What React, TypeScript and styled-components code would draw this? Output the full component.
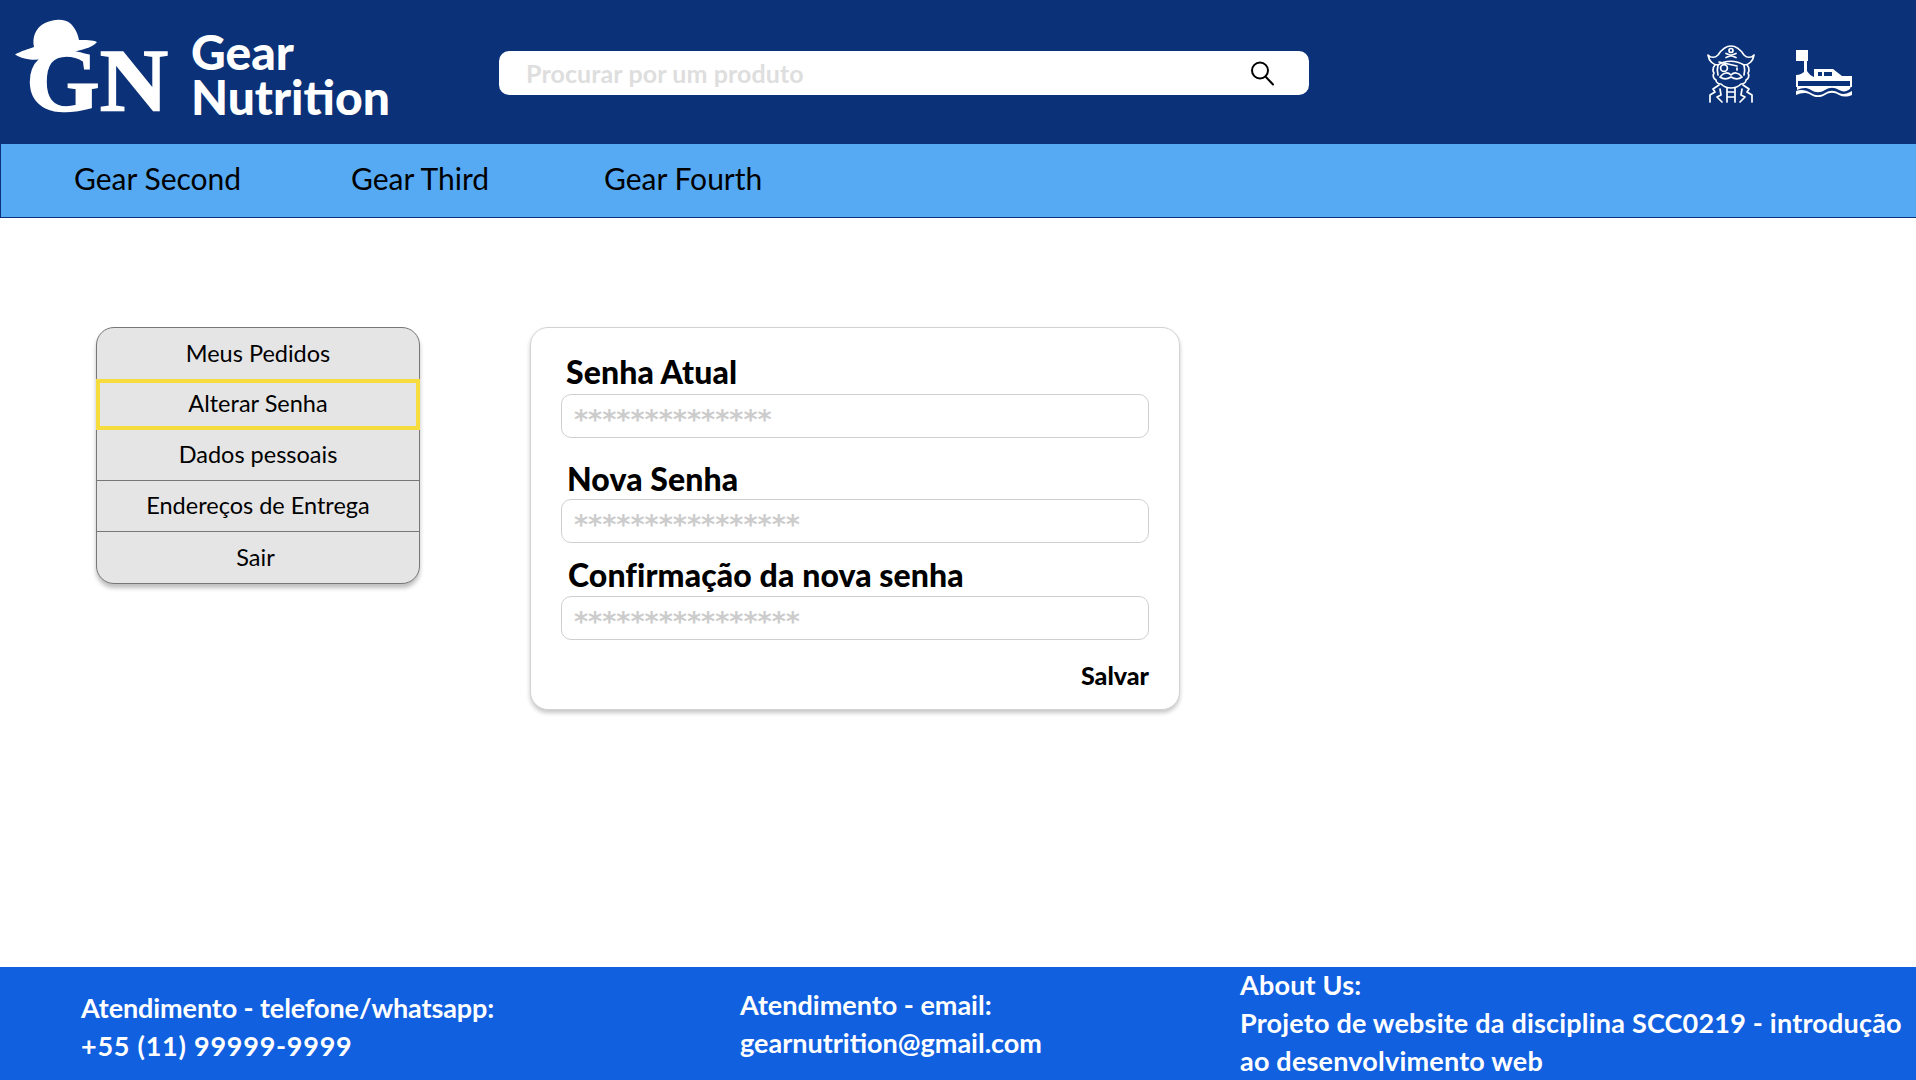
import React from "react";
import styled, { createGlobalStyle } from "styled-components";

const GlobalStyle = createGlobalStyle`
  html, body {
    margin: 0;
    padding: 0;
    background: #fff;
  }
  * {
    box-sizing: border-box;
  }
  body {
    font-family: Lato, "Noto Sans", sans-serif;
    color: #000;
  }
`;

const Page = styled.div`
  width: 1916px;
  height: 1080px;
  display: flex;
  flex-direction: column;
  overflow: hidden;
`;

const Header = styled.header`
  height: 144px;
  flex: none;
  background: #0b3278;
  display: flex;
  align-items: center;
  padding: 0 64px 0 15px;
`;

const LogoMark = styled.svg`
  width: 158px;
  height: 116px;
  flex: none;
  margin-top: 3px;
`;

const Brand = styled.div`
  width: 326px;
  flex: none;
  padding-left: 18px;
  margin-top: 4px;
  font-size: 48px;
  font-weight: 900;
  line-height: 45px;
  color: #fff;
`;

const Search = styled.div`
  width: 810px;
  height: 44px;
  margin-top: 2px;
  border-radius: 10px;
  background: #fff;
  display: flex;
  align-items: center;
  justify-content: space-between;
  padding: 0 34px 0 27px;
`;

const SearchText = styled.span`
  font-size: 25px;
  font-weight: 700;
  letter-spacing: 0.1px;
  color: #dedede;
`;

const HeaderIcons = styled.div`
  margin-left: auto;
  margin-top: 3px;
  display: flex;
  align-items: center;
  gap: 41px;
`;

const Nav = styled.nav`
  height: 74px;
  flex: none;
  background: #56aaf4;
  border-left: 1px solid #0b3278;
  border-bottom: 1px solid #0b3278;
  display: grid;
  grid-template-columns: 277px 253px auto;
  justify-content: start;
  align-items: center;
  padding: 0 0 5px 73px;
`;

const NavItem = styled.a`
  font-size: 30px;
  color: #000;
`;

const Main = styled.main`
  flex: 1;
  display: flex;
  align-items: flex-start;
  gap: 110px;
  padding: 109px 0 0 96px;
`;

const Menu = styled.ul`
  width: 324px;
  margin: 0;
  padding: 0;
  list-style: none;
  background: #e5e5e5;
  border: 1px solid #777;
  border-radius: 18px;
  box-shadow: 0 4px 4px rgba(0, 0, 0, 0.25);
`;

const MenuItem = styled.li<{ $active?: boolean; $rule?: boolean; $nudge?: number }>`
  height: 51px;
  display: flex;
  align-items: center;
  justify-content: center;
  padding: 0 ${(p) => p.$nudge ?? 0}px ${(p) => (p.$active ? 3 : 2)}px 0;
  font-size: 23.5px;
  margin: ${(p) => (p.$active ? "0 -1px" : "0")};
  border: ${(p) => (p.$active ? "4px solid #f6dc3c" : "0")};
  border-bottom: ${(p) => (p.$rule ? "1px solid #777" : undefined)};
`;

const FormCard = styled.form`
  width: 650px;
  height: 383px;
  background: #fff;
  border: 1px solid #d3d3d3;
  border-radius: 18px;
  box-shadow: 0 3px 4px rgba(0, 0, 0, 0.22);
  padding: 0 30px;
  display: flex;
  flex-direction: column;
`;

const FieldLabel = styled.label<{ $top: number; $indent: number; $height: number }>`
  display: block;
  height: ${(p) => p.$height}px;
  margin-top: ${(p) => p.$top}px;
  padding-left: ${(p) => p.$indent}px;
  font-size: 32px;
  font-weight: 900;
  line-height: 39px;
  letter-spacing: 0.1px;
`;

const FieldBox = styled.div`
  height: 44px;
  margin-top: 3px;
  border: 1px solid #cfcfcf;
  border-radius: 10px;
  padding: 8px 0 0 12px;
  font-family: "DejaVu Sans", sans-serif;
  font-size: 27px;
  font-weight: 700;
  line-height: 34px;
  color: #cccccc;
`;

const SaveRow = styled.div`
  margin-top: 20px;
  text-align: right;
  font-size: 25px;
  font-weight: 900;
  line-height: 30px;
`;

const Footer = styled.footer`
  height: 113px;
  flex: none;
  background: #1160e0;
  display: grid;
  grid-template-columns: 659px 500px 1fr;
  align-items: center;
  padding-left: 81px;
  color: #fff;
  font-size: 27px;
  font-weight: 700;
  line-height: 38px;
`;

const FooterColumn = styled.div<{ $shift?: number; $spacing?: number }>`
  margin-top: ${(p) => p.$shift ?? 0}px;
  letter-spacing: ${(p) => p.$spacing ?? 0}px;
`;

const Phone = styled.span`
  letter-spacing: 0.75px;
`;

function HatLogo() {
  return (
    <LogoMark viewBox="0 0 158 116" aria-hidden="true">
      <path
        d="M0 38.5 C6 35 14 33 19 31 C17 22 20 12 30 7 C38 3 50 2 56 8 C61 13 63 19 64 24 C70 24 78 24 82 26 C78 31 70 33 62 35 C45 40 25 45 15 43.5 C9 43 4 41 0 38.5 Z"
        fill="#fff"
      />
      <text
        x="11"
        y="94"
        fontFamily="'Liberation Serif', serif"
        fontWeight="700"
        fontSize="88"
        fill="#fff"
        stroke="#fff"
        strokeWidth="1.5"
        textLength="142"
        lengthAdjust="spacingAndGlyphs"
      >
        GN
      </text>
    </LogoMark>
  );
}

function SearchIcon() {
  return (
    <svg width="26" height="26" viewBox="0 0 26 26" fill="none" stroke="#000" strokeWidth="2">
      <circle cx="11" cy="10.5" r="8" />
      <path d="M16.5 16.5 L24 24.5" strokeLinecap="round" />
    </svg>
  );
}

function PirateIcon() {
  return (
    <svg width="48" height="58" viewBox="0 0 48 58" fill="none" stroke="#fff" strokeWidth="1.7" strokeLinecap="round" strokeLinejoin="round">
      <path d="M1 10 C4 13 8 13 11 10 C15 4 20 1 24 1 C29 1 33 4 37 10 C40 13 44 13 47 10 C46 16 42 20 37 20 C29 15 18 15 11 20 C6 20 2 16 1 10 Z" />
      <circle cx="24" cy="5.5" r="2" />
      <path d="M19 8.5 L29 12.5 M29 8.5 L19 12.5" />
      <path d="M11 20 C10 24 10 27 11 30 M37 20 C38 24 38 27 37 30" />
      <circle cx="17" cy="23" r="3.4" />
      <path d="M12 17 L30 21" />
      <path d="M30 23 L30 25" />
      <path d="M13 32 C17 27 21 27 24 30 C27 27 31 27 35 32 C31 35 27 34 24 32 C21 34 17 35 13 32 Z" />
      <path d="M8 20 C5 23 6 27 7 28 C5 31 7 34 9 35 C9 38 12 39 14 39 C17 42 20 43 24 43 C28 43 31 42 34 39 C36 39 39 38 39 35 C41 34 43 31 41 28 C42 27 43 23 40 20" />
      <path d="M12 40 L6 44 L8 47 L3 50 L3 57 M36 40 L42 44 L40 47 L45 50 L45 57" />
      <path d="M13 44 L14 50 L10 52 L15 57 M35 44 L34 50 L38 52 L33 57" />
      <path d="M20 43 L20 57 M28 43 L28 57 M20 47 L28 47 M20 52 L28 52" />
    </svg>
  );
}

function BoatIcon() {
  return (
    <svg width="56" height="47" viewBox="0 0 56 47" fill="#fff">
      <rect x="0" y="0" width="12" height="11" />
      <rect x="8" y="11" width="3" height="12" />
      <path d="M0 25 C4 25 7 23 9 21 L11 21 C13 24 15 26 18 27 L18 19 L37 19 L46 26 L56 26 L56 31 L0 31 Z" />
      <rect x="22" y="22" width="4" height="4" fill="#0b3278" />
      <rect x="28" y="22" width="8" height="4" fill="#0b3278" />
      <rect x="0" y="31" width="2" height="6" />
      <rect x="54" y="31" width="2" height="6" />
      <path d="M1 36 L55 36 L54 39 C50 42 47 42 43 40 C38 37 34 37 29 40 C24 43 20 43 15 40 C10 37 6 38 1 40 Z" />
      <path d="M0 41 C5 39 10 40 15 43 C20 46 24 46 29 43 C34 40 38 40 43 43 C47 45 51 44 56 41 L56 45 C51 47 47 47 43 45 C38 42 34 42 29 45 C24 48 20 48 15 45 C10 42 5 43 0 45 Z" />
    </svg>
  );
}

export default function App() {
  return (
    <Page>
      <GlobalStyle />
      <Header>
        <HatLogo />
        <Brand>
          Gear
          <br />
          Nutrition
        </Brand>
        <Search>
          <SearchText>Procurar por um produto</SearchText>
          <SearchIcon />
        </Search>
        <HeaderIcons>
          <PirateIcon />
          <BoatIcon />
        </HeaderIcons>
      </Header>
      <Nav>
        <NavItem>Gear Second</NavItem>
        <NavItem>Gear Third</NavItem>
        <NavItem>Gear Fourth</NavItem>
      </Nav>
      <Main>
        <Menu>
          <MenuItem>Meus Pedidos</MenuItem>
          <MenuItem $active>Alterar Senha</MenuItem>
          <MenuItem $rule>Dados pessoais</MenuItem>
          <MenuItem $rule>Endereços de Entrega</MenuItem>
          <MenuItem $nudge={5}>Sair</MenuItem>
        </Menu>
        <FormCard>
          <FieldLabel $top={24} $indent={5} $height={39}>Senha Atual</FieldLabel>
          <FieldBox>**************</FieldBox>
          <FieldLabel $top={21} $indent={6} $height={37}>Nova Senha</FieldLabel>
          <FieldBox>****************</FieldBox>
          <FieldLabel $top={12} $indent={7} $height={38}>Confirmação da nova senha</FieldLabel>
          <FieldBox>****************</FieldBox>
          <SaveRow>Salvar</SaveRow>
        </FormCard>
      </Main>
      <Footer>
        <FooterColumn $shift={6} $spacing={-0.1}>
          Atendimento - telefone/whatsapp:
          <br />
          <Phone>+55 (11) 99999-9999</Phone>
        </FooterColumn>
        <FooterColumn>
          Atendimento - email:
          <br />
          gearnutrition@gmail.com
        </FooterColumn>
        <FooterColumn $shift={-2} $spacing={0.2}>
          About Us:
          <br />
          Projeto de website da disciplina SCC0219 - introdução ao desenvolvimento web
        </FooterColumn>
      </Footer>
    </Page>
  );
}
